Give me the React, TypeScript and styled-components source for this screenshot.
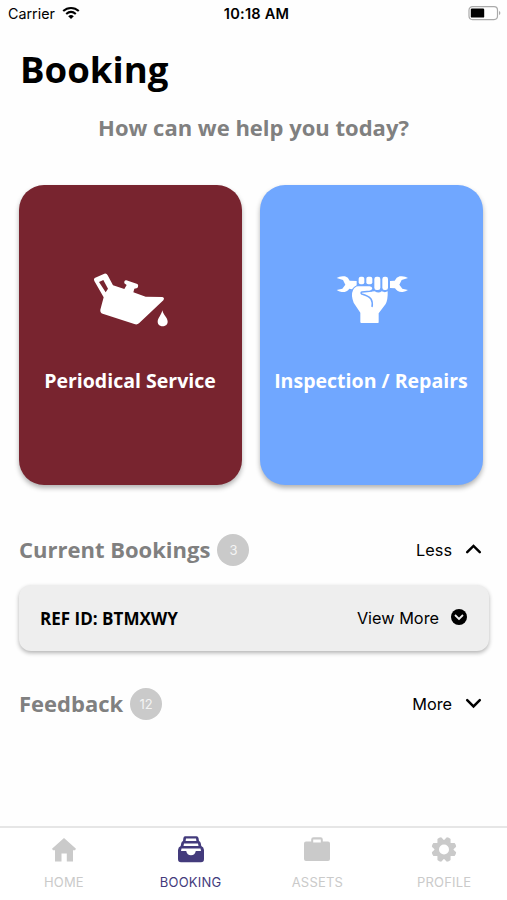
import React from "react";
import styled, { createGlobalStyle } from "styled-components";

const Global = createGlobalStyle`
  * { box-sizing: border-box; }
  body { margin: 0; background: #fff; }
  svg { display: block; flex: none; }
`;

const Screen = styled.div`
  width: 507px;
  height: 900px;
  display: flex;
  flex-direction: column;
  overflow: hidden;
  background: #fefefe;
  color: #000;
  font-family: Inter, "Liberation Sans", sans-serif;
`;

const StatusBar = styled.header`
  height: 28px;
  display: grid;
  grid-template-columns: 1fr auto 1fr;
  align-items: center;
  padding: 0 6px 2px 8px;
  font-size: 14.3px;
`;

const Carrier = styled.div`
  display: flex;
  align-items: center;
  gap: 7px;
`;

const Clock = styled.div`
  font-weight: 600;
  font-size: 14.6px;
  letter-spacing: 0.2px;
  margin-left: 4px;
  padding-top: 2px;
`;

const BatterySlot = styled.div`
  display: flex;
  justify-content: flex-end;
`;

const Title = styled.h1`
  margin: 0;
  padding-left: 20px;
  height: 84px;
  font: 700 36.6px/83px "Open Sans", sans-serif;
`;

const Question = styled.p`
  margin: 0;
  height: 73px;
  text-align: center;
  color: #808080;
  font: 700 22px/30px "Open Sans", sans-serif;
`;

const Cards = styled.div`
  display: flex;
  gap: 18px;
  padding-left: 19px;
`;

const Card = styled.button<{ $color: string }>`
  width: 223px;
  height: 300px;
  display: flex;
  flex-direction: column;
  align-items: center;
  justify-content: flex-start;
  border: 0;
  border-radius: 25px;
  padding: 75px 0 0;
  background: ${(p) => p.$color};
  color: #fff;
  box-shadow: 0 3px 5px rgba(0, 0, 0, 0.3);
`;

const CardLabel = styled.span`
  margin-top: 27px;
  padding-right: 1px;
  white-space: nowrap;
  font: 700 19.55px/28px "Open Sans", sans-serif;
`;

const SectionHead = styled.div<{ $top: number }>`
  display: flex;
  align-items: center;
  height: 32px;
  margin-top: ${(p) => p.$top}px;
  padding: 0 25px 0 19px;
`;

const SectionTitle = styled.h2`
  margin: 0;
  color: #808080;
  font: 700 22px/32px "Open Sans", sans-serif;
  padding-bottom: 2px;
`;

const Count = styled.span`
  width: 32px;
  height: 32px;
  margin-left: 7px;
  border-radius: 50%;
  background: #cacaca;
  color: #f4f4f4;
  font-size: 13px;
  line-height: 32px;
  text-align: center;
`;

const Toggle = styled.div`
  display: flex;
  align-items: center;
  gap: 13px;
  margin-left: auto;
  font-size: 16.3px;
`;

const BookingRow = styled.div`
  display: flex;
  align-items: center;
  height: 66px;
  margin: 19px 18px 0 19px;
  padding: 0 22px 0 21px;
  border-radius: 12px;
  background: #eee;
  box-shadow: 0 2px 4px rgba(0, 0, 0, 0.3);
`;

const Reference = styled.span`
  padding-top: 1px;
  font: 700 17.05px/24px "Open Sans", sans-serif;
`;

const ViewMore = styled.div`
  display: flex;
  align-items: center;
  gap: 12px;
  margin-left: auto;
  font-size: 16.3px;
`;

const TabBar = styled.nav`
  display: grid;
  grid-template-columns: repeat(4, 1fr);
  height: 74px;
  margin-top: auto;
  border-top: 2px solid #e6e6e6;
  background: #fff;
`;

const Tab = styled.div<{ $active?: boolean }>`
  display: flex;
  flex-direction: column;
  align-items: center;
  padding: 7px 0 0 1px;
  color: ${(p) => (p.$active ? "#433b7c" : "#cacaca")};
`;

const TabLabel = styled.span`
  margin-top: 8px;
  font-size: 13px;
  line-height: 19px;
  letter-spacing: 0.2px;
`;

const WifiIcon = () => (
  <svg width="18" height="14" viewBox="0 0 18 14" fill="none" stroke="#000" strokeWidth="2.1">
    <path d="M1.2 5C5.7 .9 12.3 .9 16.8 5M4.2 8C7.1 5.5 10.9 5.5 13.8 8" />
    <path d="M9 13 6.2 10.2Q9 8 11.8 10.2Z" fill="#000" stroke="none" />
  </svg>
);

const BatteryIcon = () => (
  <svg width="33" height="16" viewBox="0 0 33 16">
    <rect x="1" y="1.6" width="28.5" height="13" rx="3.5" fill="#fff" stroke="#aaa" strokeWidth="1.2" />
    <rect x="2.8" y="3.6" width="13.4" height="9" rx="1.2" />
    <path d="M31 6v4q1.4-.5 1.4-2T31 6" fill="#aaa" />
  </svg>
);

const OilCanIcon = () => (
  <svg width="100" height="80" viewBox="3 0 300 240" fill="#fff">
    <path
      fillRule="evenodd"
      d="M44 54 73 41Q80 39 83 46L99 76 133 87 140 75 133 70Q132 60 139 61L172 72Q177 76 172 84L163 86 160 97 197 110 247 111Q255 113 250 121L177 190Q171 195 163 192L68 161Q60 158 61 149L71 112 43 63Q40 57 44 54ZM57 66 70 60 84 86 77 97Z"
    />
    <path d="M247 151C244 166 233 174 233 185C233 203 263 203 263 185C263 173 250 166 247 151Z" />
  </svg>
);

const WrenchFistIcon = () => (
  <svg width="100" height="80" viewBox="5 0 300 240" fill="#fff">
    <path d="M49 54Q59 47 74 49 84 52 88 62L109 63 109 76Q100 80 95 88L87 86Q80 97 64 96 55 95 49 90L66 86 75 74 68 60Z" />
    <path d="M263 54Q253 47 238 49 228 52 223 62L209 63 209 84 224 85Q231 97 247 96 256 95 263 90L246 86 237 74 244 60Z" />
    <rect x="115" y="50" width="17" height="23" rx="6" />
    <rect x="138" y="50" width="18" height="23" rx="6" />
    <rect x="162" y="50" width="18" height="40" rx="7" />
    <rect x="186" y="50" width="17" height="40" rx="7" />
    <path d="M113 79H148Q156 80 156 87T148 95L163 94Q175 101 184 94 194 99 202 94 203 119 196 132L175 160V187Q175 189 173 189H123Q120 189 120 186V158L100 128Q91 105 98 91 103 80 113 79Z" />
    <path
      d="M157 87Q157 93 148 94L125 96Q120 98 124 102 144 107 152 117 158 127 155 141"
      fill="none"
      stroke="#70a7ff"
      strokeWidth="4.5"
      strokeLinejoin="round"
    />
  </svg>
);

const Chevron = ({ up = false }: { up?: boolean }) => (
  <svg width="17" height="12" viewBox="0 0 17 12" fill="none" stroke="#000" strokeWidth="2.5" strokeLinecap="round">
    <path d={up ? "M2.2 8.2 8.5 1.9 14.8 8.2" : "M2.2 2.2 8.5 8.5 14.8 2.2"} />
  </svg>
);

const DownCircle = () => (
  <svg width="16" height="18" viewBox="0 0 16 18">
    <circle cx="8" cy="8" r="8" />
    <path d="M4 6 8 9.9 12 6" fill="none" stroke="#eee" strokeWidth="1.8" />
  </svg>
);

const HomeIcon = () => (
  <svg width="28" height="30" viewBox="0 0 28 30" fill="currentColor">
    <path d="M14 3 26 13.7 25 15.2H23V26.5H16.8V18.5H11.5V26.5H5V15.2H3L2 13.7Z" />
  </svg>
);

const TrayIcon = () => (
  <svg width="28" height="30" viewBox="0 0 28 30" fill="currentColor">
    <path
      fillRule="evenodd"
      d="M8 1.2H19.5Q21.2 1.2 21.5 3L22 6Q23.3 6.3 23.7 8L24.3 11Q26.8 12.2 27 15V24Q27 27.3 24 27.3H4Q1 27.3 1 24V15Q1.2 12.2 3.7 11L4.3 8Q4.7 6.3 6 6L6.4 3Q6.7 1.2 8 1.2ZM9 3.6 8.6 6H19.4L19 3.6ZM7 8.5 6.5 11H21.5L21 8.5ZM4.5 13.6 4 16H9.2Q10 20.2 14 20.2T18.8 16H24L23.5 13.6Z"
    />
  </svg>
);

const CaseIcon = () => (
  <svg width="28" height="30" viewBox="0 0 28 30" fill="currentColor">
    <path
      fillRule="evenodd"
      d="M8.2 6.5V4.6Q8.2 2.3 10.5 2.3H17.5Q19.8 2.3 19.8 4.6V6.5H25Q27 6.5 27 8.5V24Q27 26 25 26H3Q1 26 1 24V8.5Q1 6.5 3 6.5ZM10.2 7.5H17.8V4.5H10.2Z"
    />
  </svg>
);

const GearIcon = () => (
  <svg width="28" height="30" viewBox="0 0 28 30">
    <g fill="currentColor">
      {[22.5, 67.5, 112.5, 157.5, 202.5, 247.5, 292.5, 337.5].map((a) => (
        <path key={a} d="M10 7 12 2.2Q14 1.4 16 2.2L18 7Z" transform={`rotate(${a} 14 14.5)`} />
      ))}
      <circle cx="14" cy="14.5" r="9.3" />
    </g>
    <circle cx="14" cy="14.5" r="5" fill="#fff" />
  </svg>
);

export default function App() {
  return (
    <Screen>
      <Global />
      <StatusBar>
        <Carrier>Carrier <WifiIcon /></Carrier>
        <Clock>10:18 AM</Clock>
        <BatterySlot><BatteryIcon /></BatterySlot>
      </StatusBar>
      <Title>Booking</Title>
      <Question>How can we help you today?</Question>
      <Cards>
        <Card $color="#78242f"><OilCanIcon /><CardLabel>Periodical Service</CardLabel></Card>
        <Card $color="#70a7ff"><WrenchFistIcon /><CardLabel>Inspection / Repairs</CardLabel></Card>
      </Cards>
      <SectionHead $top={49}>
        <SectionTitle>Current Bookings</SectionTitle>
        <Count>3</Count>
        <Toggle>Less <Chevron up /></Toggle>
      </SectionHead>
      <BookingRow>
        <Reference>REF ID: BTMXWY</Reference>
        <ViewMore>View More <DownCircle /></ViewMore>
      </BookingRow>
      <SectionHead $top={37}>
        <SectionTitle>Feedback</SectionTitle>
        <Count>12</Count>
        <Toggle>More <Chevron /></Toggle>
      </SectionHead>
      <TabBar>
        <Tab><HomeIcon /><TabLabel>HOME</TabLabel></Tab>
        <Tab $active><TrayIcon /><TabLabel>BOOKING</TabLabel></Tab>
        <Tab><CaseIcon /><TabLabel>ASSETS</TabLabel></Tab>
        <Tab><GearIcon /><TabLabel>PROFILE</TabLabel></Tab>
      </TabBar>
    </Screen>
  );
}
